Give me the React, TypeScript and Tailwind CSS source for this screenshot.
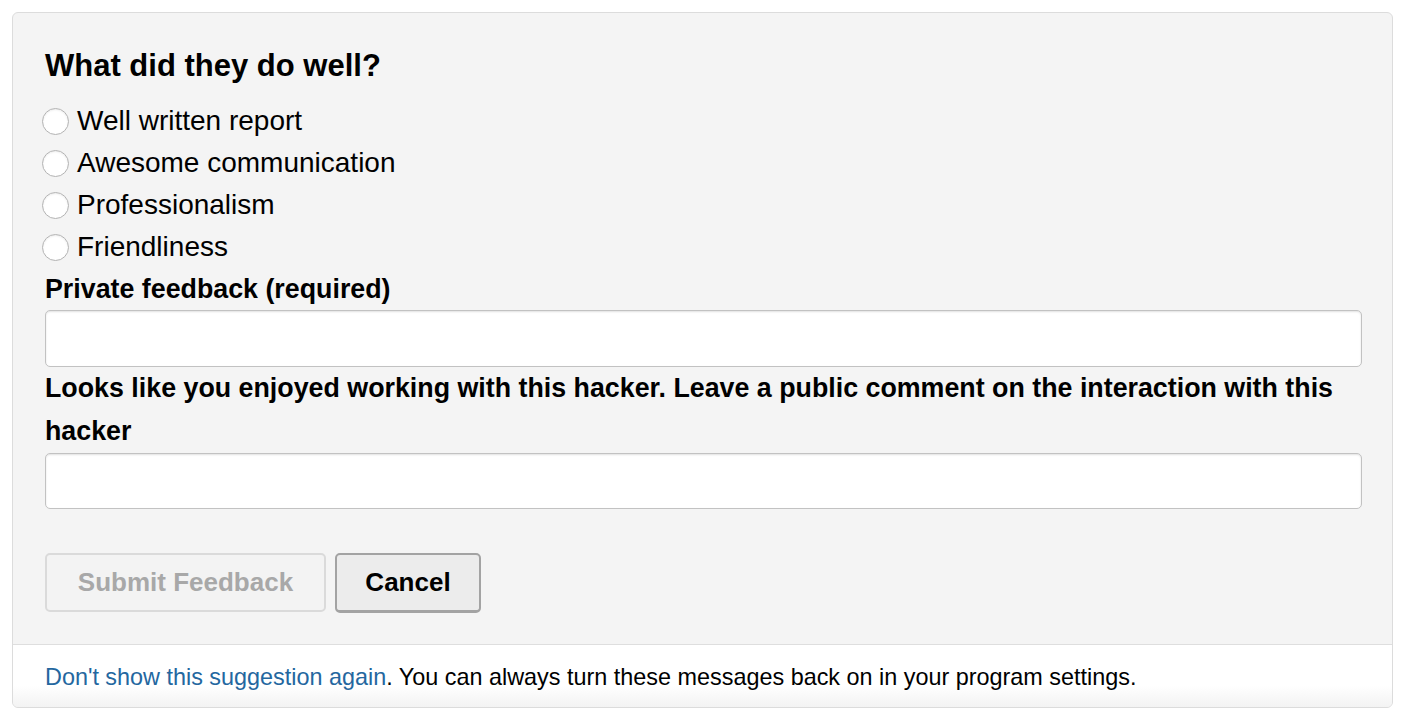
const options = [
  "Well written report",
  "Awesome communication",
  "Professionalism",
  "Friendliness",
]

function Radio({ label }: { label: string }) {
  return (
    <label className="flex items-center gap-2 leading-[42px] text-[28px] text-black">
      <span className="-ml-[3px] h-[27px] w-[27px] shrink-0 rounded-full border border-[#b3b3b3] bg-white shadow-[inset_0_1px_2px_rgba(0,0,0,0.08)]" />
      <span>{label}</span>
    </label>
  )
}

export default function App() {
  return (
    <div className="bg-white p-3 font-['Liberation_Sans',Arial,sans-serif]">
      <div className="w-[1381px] overflow-hidden rounded-[6px] border border-[#dcdcdc] bg-[#f4f4f4]">
        <div className="pl-8 pr-[30px] pt-[35px] pb-8">
          <h2 className="text-[31px] font-bold leading-[36px] text-black">What did they do well?</h2>

          <div className="mt-4">
            {options.map((o) => (
              <Radio key={o} label={o} />
            ))}
          </div>

          <div className="text-[26.8px] font-bold leading-[42px] text-black">Private feedback (required)</div>
          <div className="h-[57px] rounded-[5px] border border-[#c2c2c2] bg-white shadow-[inset_0_1px_2px_rgba(0,0,0,0.12)]" />

          <div className="text-[26.8px] font-bold leading-[43px] text-black">
            Looks like you enjoyed working with this hacker. Leave a public comment on the interaction with this hacker
          </div>
          <div className="h-[56px] rounded-[5px] border border-[#c2c2c2] bg-white shadow-[inset_0_1px_2px_rgba(0,0,0,0.12)]" />

          <div className="mt-[44px] flex gap-[9px]">
            <button
              disabled
              className="h-[59px] w-[281px] rounded-[5px] border-2 border-[#dadada] bg-[#f3f3f3] text-[26px] font-bold text-[#a8a8a8]"
            >
              Submit Feedback
            </button>
            <button className="h-[60px] w-[146px] rounded-[5px] border-2 border-b-[3px] border-[#a3a3a3] bg-[#ececec] text-[26px] font-bold text-black">
              Cancel
            </button>
          </div>
        </div>

        <div className="-mt-px border-t border-[#dedede] bg-[linear-gradient(to_bottom,#ffffff_65%,#f3f3f3)] pl-8 pt-[19px] pb-[17px] text-[23.4px] leading-[26px] text-black">
          <a className="text-[#24679f]">Don't show this suggestion again</a>. You can always turn these messages back on in your program settings.
        </div>
      </div>
    </div>
  )
}
